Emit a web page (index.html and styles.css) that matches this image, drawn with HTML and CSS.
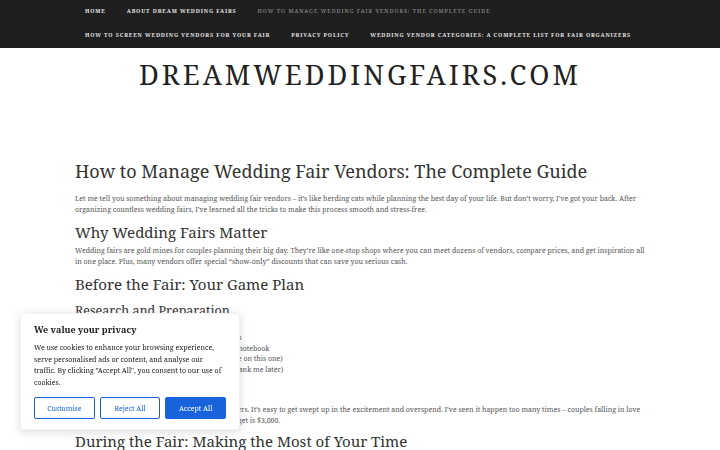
FILE: index.html
```html
<!DOCTYPE html>
<html lang="en">
<head>
<meta charset="utf-8">
<title>How to Manage Wedding Fair Vendors: The Complete Guide</title>
<link rel="stylesheet" href="styles.css">
</head>
<body>
<nav class="topnav">
  <ul class="menu">
    <li><a href="#">Home</a></li>
    <li><a href="#">About Dream Wedding Fairs</a></li>
    <li class="current"><a href="#">How to Manage Wedding Fair Vendors: The Complete Guide</a></li>
  </ul>
  <ul class="menu">
    <li><a href="#">How to Screen Wedding Vendors for Your Fair</a></li>
    <li><a href="#">Privacy Policy</a></li>
    <li><a href="#">Wedding Vendor Categories: A Complete List for Fair Organizers</a></li>
  </ul>
</nav>
<header class="masthead">
  <div class="site-title">DreamWeddingFairs.com</div>
</header>
<main class="content">
  <h1>How to Manage Wedding Fair Vendors: The Complete Guide</h1>
  <p>Let me tell you something about managing wedding fair vendors – it’s like herding cats while planning the best day of your life. But don’t worry, I’ve got your back. After organizing countless wedding fairs, I’ve learned all the tricks to make this process smooth and stress-free.</p>
  <h2>Why Wedding Fairs Matter</h2>
  <p>Wedding fairs are gold mines for couples planning their big day. They’re like one-stop shops where you can meet dozens of vendors, compare prices, and get inspiration all in one place. Plus, many vendors offer special “show-only” discounts that can save you serious cash.</p>
  <h2>Before the Fair: Your Game Plan</h2>
  <h3>Research and Preparation</h3>
  <ul class="list">
    <li>Start researching vendors at least 3-6 months</li>
    <li>Bring a dedicated wedding fair folder and a notebook</li>
    <li>Prepare a list of must-ask questions (trust me on this one)</li>
    <li>Wear comfortable shoes and bring water (thank me later)</li>
  </ul>
  <h3 class="tight">Set Your Budget</h3>
  <p>Set a budget before you go and know your numbers. It’s easy to get swept up in the excitement and overspend. I’ve seen it happen too many times – couples falling in love with vendors they can’t afford. If your photo budget is $3,000.</p>
  <h2 class="after-budget">During the Fair: Making the Most of Your Time</h2>
</main>
<div class="cookie">
  <div class="cookie-title">We value your privacy</div>
  <p class="cookie-text">We use cookies to enhance your browsing experience, serve personalised ads or content, and analyse our traffic. By clicking "Accept All", you consent to our use of cookies.</p>
  <div class="cookie-buttons">
    <button class="btn">Customise</button>
    <button class="btn">Reject All</button>
    <button class="btn btn-primary">Accept All</button>
  </div>
</div>
</body>
</html>
```
FILE: styles.css
```css
html, body {
  margin: 0;
  padding: 0;
  background: #fff;
  font-family: "Noto Serif", "DejaVu Serif", "Liberation Serif", serif;
  color: #444;
}
.topnav {
  background: #1f1f1f;
  height: 48px;
  padding: 0 0 0 85px;
  box-sizing: border-box;
}
.menu {
  list-style: none;
  margin: 0;
  padding: 0 0 10px;
  display: flex;
  gap: 21px;
  height: 14px;
  align-items: center;
}
.menu a {
  color: #e4e4e4;
  text-decoration: none;
  text-transform: uppercase;
  font-size: 5.4px;
  font-weight: bold;
  letter-spacing: 0.85px;
}
.menu .current a {
  color: #9a9a9a;
  font-weight: normal;
  letter-spacing: 1px;
}
.masthead {
  text-align: center;
  padding: 9px 0 0;
  height: 64px;
  box-sizing: border-box;
}
.site-title {
  font-size: 27.2px;
  letter-spacing: 3px;
  text-transform: uppercase;
  color: #222;
  line-height: 36px;
}
.content {
  padding: 0 75px;
}
h1 {
  font-size: 18px;
  font-weight: normal;
  color: #333;
  margin: 48px 0 10.5px;
  line-height: 22px;
}
h2 {
  font-size: 15px;
  font-weight: normal;
  color: #333;
  margin: 8.5px 0 3.5px;
  line-height: 18px;
}
h2.after-budget {
  margin-top: 6px;
}
h3 {
  font-size: 12.5px;
  font-weight: normal;
  color: #333;
  margin: 9.5px 0 15.5px;
  line-height: 15px;
}
h3.tight {
  margin: 7px 0 6px;
}
p {
  font-size: 7px;
  line-height: 11px;
  margin: 0;
  color: #555;
}
.list {
  margin: 0;
  padding-left: 16px;
  font-size: 7px;
  line-height: 10.7px;
  color: #555;
}
.cookie {
  position: fixed;
  left: 20px;
  top: 313px;
  width: 220px;
  box-sizing: border-box;
  padding: 9px 13px 10px;
  background: #fff;
  border: 1px solid #f2f2f2;
  box-shadow: 0 2px 10px rgba(0, 0, 0, 0.15);
  border-radius: 2px;
}
.cookie-title {
  font-size: 9px;
  font-weight: bold;
  color: #212121;
  margin: 0 0 6px;
}
.cookie-text {
  font-size: 7px;
  line-height: 11.5px;
  color: #212121;
  margin: 0 0 9px;
}
.cookie-buttons {
  display: flex;
  gap: 5px;
}
.btn {
  flex: 1;
  height: 22px;
  font-family: inherit;
  font-size: 7px;
  color: #1863dc;
  background: #fff;
  border: 1.5px solid #1863dc;
  border-radius: 2px;
  padding: 0;
}
.btn-primary {
  background: #1863dc;
  color: #fff;
}
```
